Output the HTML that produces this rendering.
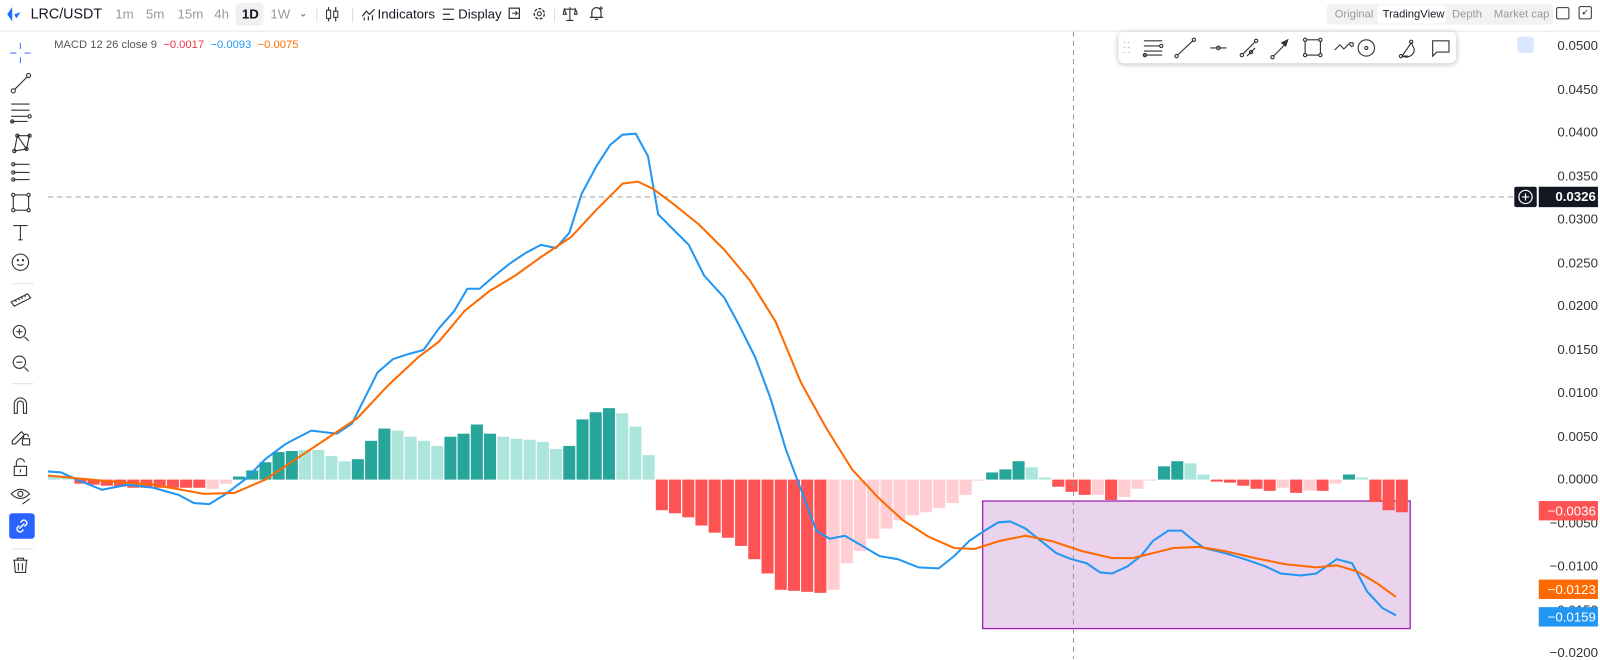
<!DOCTYPE html>
<html><head><meta charset="utf-8">
<style>
html,body{margin:0;padding:0;background:#fff;overflow:hidden;width:1600px;height:659px}
#w{position:absolute;left:0;top:0;width:1568px;height:646px;transform:scale(1.020408);transform-origin:0 0;font-family:"Liberation Sans",sans-serif;color:#131722}
.a{position:absolute}
.tb{font-size:13px;top:6px;color:#999}
.ax{position:absolute;left:1518px;font-size:13px;color:#333;width:48px;text-align:right}
.mk{position:absolute;left:1508px;width:58px;height:19px;color:#fff;font-size:13px;line-height:19px;text-align:right;padding-right:2px;box-sizing:border-box}
</style></head><body><div id="w">
<!-- top bar -->
<div class="a" style="left:0;top:30px;width:1568px;height:1px;background:#e8e8e8"></div>
<svg class="a" style="left:4px;top:6px" width="18" height="16" viewBox="0 0 18 16"><path d="M8 1 L3 8 L8 15 Z" fill="#1e6fff"/><path d="M10 8 L16 6 L12 12 Z" fill="#1e6fff"/></svg>
<div class="a" style="left:30px;top:5px;font-size:14px;color:#131722">LRC/USDT</div>
<div class="a tb" style="left:113px">1m</div>
<div class="a tb" style="left:143px">5m</div>
<div class="a tb" style="left:174px">15m</div>
<div class="a tb" style="left:210px">4h</div>
<div class="a" style="left:231px;top:3px;width:27px;height:22px;background:#f0f0f0;border-radius:3px"></div>
<div class="a tb" style="left:237px;color:#131722;font-weight:bold">1D</div>
<div class="a tb" style="left:265px">1W</div>
<div class="a tb" style="left:293px;font-size:10px;top:8px;color:#555">&#8964;</div>
<div class="a" style="left:310px;top:8px;width:1px;height:14px;background:#ddd"></div>
<svg class="a" style="left:319px;top:6px" width="14" height="16"><path d="M3 1v14M10 1v14" stroke="#333" stroke-width="1.2"/><rect x="1" y="4" width="4" height="8" fill="#fff" stroke="#333"/><rect x="8" y="5" width="4" height="6" fill="#fff" stroke="#333"/></svg>
<div class="a" style="left:345px;top:8px;width:1px;height:14px;background:#ddd"></div>
<svg class="a" style="left:354px;top:7px" width="14" height="14"><path d="M1 9 L5 4 L8 7 L13 2" fill="none" stroke="#333" stroke-width="1.2"/><path d="M3 13v-3M7 13v-4M11 13v-5" stroke="#333" stroke-width="1.2"/></svg>
<div class="a" style="left:370px;top:6px;font-size:13px;color:#131722">Indicators</div>
<svg class="a" style="left:433px;top:7px" width="13" height="14"><path d="M1 2h11M1 7h7M1 12h11" stroke="#333" stroke-width="1.2"/></svg>
<div class="a" style="left:449px;top:6px;font-size:13px;color:#131722">Display</div>
<svg class="a" style="left:497px;top:6px" width="14" height="16"><rect x="2" y="2" width="10" height="10" fill="none" stroke="#333" stroke-width="1.2"/><path d="M5 7h6M8 5l2 2-2 2" stroke="#333" fill="none"/></svg>
<svg class="a" style="left:521px;top:6px" width="15" height="15"><circle cx="7.5" cy="7.5" r="5" fill="none" stroke="#333" stroke-width="1.3" stroke-dasharray="3 1.5"/><circle cx="7.5" cy="7.5" r="2" fill="none" stroke="#333"/></svg>
<div class="a" style="left:543px;top:8px;width:1px;height:14px;background:#ddd"></div>
<svg class="a" style="left:551px;top:6px" width="15" height="15"><path d="M7.5 1v13M2 3h11M4 14h7M2 3l-1 5h3zM13 3l-1 5h3z" stroke="#333" fill="none" stroke-width="1.1"/></svg>
<svg class="a" style="left:577px;top:5px" width="15" height="16"><path d="M3 12V7a4.5 4.5 0 0 1 9 0v5M1 12h13M6 14h3" stroke="#333" fill="none" stroke-width="1.2"/><path d="M12 1v4M10 3h4" stroke="#333"/></svg>
<!-- right segmented -->
<div class="a" style="left:1300px;top:4px;width:222px;height:20px;background:#f2f2f2;border-radius:4px"></div>
<div class="a" style="left:1350px;top:5px;width:67px;height:18px;background:#fff;border-radius:3px"></div>
<div class="a" style="left:1308px;top:8px;font-size:11px;color:#999">Original</div>
<div class="a" style="left:1355px;top:8px;font-size:11px;color:#131722">TradingView</div>
<div class="a" style="left:1423px;top:8px;font-size:11px;color:#999">Depth</div>
<div class="a" style="left:1464px;top:8px;font-size:11px;color:#999">Market cap</div>
<div class="a" style="left:1525px;top:7px;width:11px;height:10px;border:1.3px solid #333;border-radius:2px"></div>
<div class="a" style="left:1547px;top:6px;width:11px;height:11px;border:1.3px solid #333;border-radius:2px;font-size:8px;line-height:10px;text-align:center">&#8601;</div>
<!-- left toolbar -->
<svg class="a" style="left:0;top:31px" width="44" height="560" viewBox="0 31 44 560" fill="none" stroke="#333" stroke-width="1.1">
<path d="M20 42v6M20 56v6M10 52h6M24 52h6" stroke="#4b7bff"/>
<path d="M14 88L27 75"/><circle cx="13" cy="89" r="2"/><circle cx="28" cy="74" r="2"/>
<path d="M11 102h18M11 108h18M11 114h16M11 119h16"/><circle cx="29" cy="114" r="1.6"/><circle cx="12" cy="119" r="1.6"/>
<path d="M14 148l3-15 9 13 3-14M14 148l12-2M17 133l12 0"/><circle cx="14" cy="148" r="1.6"/><circle cx="17" cy="133" r="1.6"/><circle cx="26" cy="146" r="1.6"/><circle cx="29" cy="133" r="1.6"/>
<path d="M13 161h16M13 169h16M13 176h16"/><circle cx="13" cy="161" r="1.6"/><circle cx="13" cy="169" r="1.6"/><circle cx="13" cy="176" r="1.6"/>
<rect x="13" y="191" width="15" height="15"/><circle cx="13" cy="191" r="1.6" fill="#fff"/><circle cx="28" cy="191" r="1.6" fill="#fff"/><circle cx="13" cy="206" r="1.6" fill="#fff"/><circle cx="28" cy="206" r="1.6" fill="#fff"/>
<path d="M13 221h14M20 221v14M18 235h4"/>
<circle cx="20" cy="257" r="8"/><circle cx="17.5" cy="255" r=".6"/><circle cx="22.5" cy="255" r=".6"/><path d="M17 259q3 2 6 0"/>
<path d="M11 296l16-8 3 4-16 8z M15 294l1 2M18 292l1 2M21 291l1 2M24 289l1 2"/>
<circle cx="19" cy="325" r="6"/><path d="M24 330l4 4M16 325h6M19 322v6"/>
<circle cx="19" cy="355" r="6"/><path d="M24 360l4 4M16 355h6"/>
<path d="M14 405v-9a6 6 0 0 1 12 0v9h-3v-9a3 3 0 0 0-6 0v9z"/>
<path d="M12 432l9-9 3 3-9 9h-3z"/><rect x="22" y="430" width="7" height="6"/><path d="M23 430v-2a2.5 2.5 0 0 1 5 0"/>
<rect x="14" y="457" width="12" height="9"/><path d="M16 457v-3a4 4 0 0 1 8 -1M20 460v3"/>
<path d="M11 484q9-9 18 0q-9 9-18 0z"/><circle cx="20" cy="484" r="2.5"/><path d="M22 494l7-5"/>
<path d="M11 538h22M11 278h22M11 376h22" stroke="#e6e6e6"/>
<path d="M13 549h14M17 549v-2h6v2M14 549l1 12h10l1-12M18 552v7M22 552v7"/>
</svg>
<div class="a" style="left:9px;top:503px;width:25px;height:25px;background:#2962ff;border-radius:3px"></div>
<svg class="a" style="left:9px;top:503px" width="25" height="25" fill="none" stroke="#fff" stroke-width="1.4"><path d="M11 9l2-2a3 3 0 0 1 4 4l-2 2M14 16l-2 2a3 3 0 0 1-4-4l2-2M10 15l5-5"/></svg>
<!-- legend -->
<div class="a" style="left:53px;top:38px;font-size:11px;color:#555">MACD 12 26 close 9&nbsp; <span style="color:#f23645">−0.0017</span>&nbsp; <span style="color:#2196f3">−0.0093</span>&nbsp; <span style="color:#ff6a00">−0.0075</span></div>
<!-- chart -->
<svg id="ch" class="a" style="left:0;top:0" width="1568" height="646">
<rect x="963" y="491" width="419" height="125" fill="#ead3ed" stroke="#9c27b0" stroke-width="1.3"/>
<g id="bars"></g>
<path d="M1052 31V646" stroke="#999" stroke-dasharray="5 4"/>
<path d="M47 193H1484" stroke="#aaa" stroke-dasharray="5 4"/>
<polyline fill="none" stroke="#2196f3" stroke-width="2" stroke-linejoin="round" points="47,462 60,463 75,470 100,480 125,475 150,478 175,485 190,493 205,494 220,485 240,470 260,450 280,435 305,422 330,425 345,415 355,395 370,365 385,352 400,347 415,343 430,322 445,305 458,283 470,283 485,270 500,258 515,248 530,240 545,243 558,228 570,190 585,162 598,142 610,132 623,131 635,153 645,210 660,225 675,240 690,270 710,292 725,320 740,350 755,390 770,440 785,480 800,520 813,528 828,525 845,535 862,545 880,548 900,556 920,557 935,545 950,530 965,520 978,512 990,511 1005,518 1020,530 1035,542 1050,548 1065,552 1078,561 1090,562 1105,555 1118,545 1130,530 1145,520 1158,520 1170,530 1180,537 1200,542 1220,548 1240,555 1255,562 1275,564 1290,562 1310,548 1325,552 1340,580 1355,596 1368,603"/>
<polyline fill="none" stroke="#ff6a00" stroke-width="2" stroke-linejoin="round" points="47,466 100,471 150,475 200,484 230,483 260,470 290,450 320,430 350,410 380,378 410,350 430,335 455,305 480,285 505,270 530,252 560,232 585,205 610,180 625,178 640,185 660,200 685,220 710,245 735,275 760,315 785,375 810,420 835,460 860,487 885,510 910,526 935,537 955,538 980,530 1005,525 1030,530 1060,540 1090,547 1110,547 1130,542 1150,537 1175,536 1200,540 1230,547 1260,553 1290,556 1310,554 1330,560 1350,572 1368,585"/>
</svg>
<div class="a" style="left:1096px;top:31px;width:331px;height:31px;background:#fff;border-radius:6px;box-shadow:0 1px 5px rgba(0,0,0,.25)"></div>
<svg class="a" style="left:1096px;top:31px" width="331" height="31" fill="none" stroke="#333" stroke-width="1.1">
<path d="M6 10v1M10 10v1M6 15v1M10 15v1M6 20v1M10 20v1" stroke="#bbb" stroke-width="1.5"/>
<path d="M25 9h18M25 14h15M25 19h18M25 23h18"/><circle cx="42" cy="14" r="1.6"/><circle cx="26" cy="23" r="1.6"/>
<path d="M58 23l15-14"/><circle cx="57" cy="24" r="1.6"/><circle cx="74" cy="8" r="1.6"/>
<path d="M90 16h16"/><circle cx="98" cy="16" r="1.8"/>
<path d="M122 22l12-12M126 24l8-8"/><circle cx="121" cy="23" r="1.6"/><circle cx="135" cy="9" r="1.6"/><circle cx="130" cy="20" r="1.6"/>
<path d="M152 24l12-12"/><path d="M160 11l6-3-2 6z" fill="#333"/><circle cx="151" cy="25" r="1.6"/>
<rect x="183" y="8" width="15" height="15"/><circle cx="183" cy="8" r="1.6" fill="#fff"/><circle cx="198" cy="8" r="1.6" fill="#fff"/><circle cx="183" cy="23" r="1.6" fill="#fff"/><circle cx="198" cy="23" r="1.6" fill="#fff"/>
<path d="M212 18l5-5 4 4 5-5 3 3M226 11h4v4"/>
<circle cx="243" cy="16" r="8"/><circle cx="243" cy="16" r="1.5"/>
<path d="M278 24l9-13 3 6q0 7-8 8zM278 24h6"/><circle cx="277" cy="24" r="1.6"/><circle cx="287" cy="10" r="1.6"/>
<path d="M308 9h16v11h-12l-4 4z"/>
</svg>
<div class="a" style="left:1487px;top:36px;width:16px;height:16px;background:#dbe6ff;border-radius:3px"></div>
<!-- axis -->
<div id="axis"></div>
<div class="a" style="left:1484px;top:183px;width:22px;height:20px;background:#131722;border-radius:2px"></div>
<svg class="a" style="left:1484px;top:183px" width="22" height="20"><circle cx="11" cy="10" r="6.5" fill="none" stroke="#fff" stroke-width="1.2"/><path d="M11 6.5v7M7.5 10h7" stroke="#fff" stroke-width="1.2"/></svg>
<div class="mk" style="top:183px;background:#131722;height:20px;line-height:20px;font-weight:bold">0.0326</div>
<div class="mk" style="top:491px;background:#ff5252">−0.0036</div>
<div class="mk" style="top:568px;background:#ff6a00">−0.0123</div>
<div class="mk" style="top:595px;background:#2196f3">−0.0159</div>
</div>
<script>
var L=[[466,'g'],[466,'g'],[474,'R'],[475,'R'],[476,'R'],[477,'R'],[478,'R'],[478,'R'],[478,'R'],[478,'R'],[478,'R'],[478,'R'],[479,'r'],[474,'r'],[467,'G'],[461,'G'],[453,'G'],[443,'G'],[442,'G'],[441,'g'],[441,'g'],[447,'g'],[452,'g'],[450,'G'],[432,'G'],[420,'G'],[422,'g'],[428,'g'],[432,'g'],[437,'g'],[428,'G'],[425,'G'],[416,'G'],[425,'G'],[428,'g'],[430,'g'],[431,'g'],[433,'g'],[440,'g'],[437,'G'],[411,'G'],[404,'G'],[400,'G'],[405,'g'],[418,'g'],[446,'g']];
[500,503,507,515,522,527,535,548,562,578,579,580,581].forEach(function(v){L.push([v,'R'])});
[578,552,540,528,518,510,505,502,498,493].forEach(function(v){L.push([v,'r'])});
L=L.concat([[485,'r'],[471,'r'],[463,'G'],[460,'G'],[452,'G'],[458,'g'],[468,'g'],[477,'R'],[482,'R'],[485,'R'],[485,'r'],[490,'R'],[487,'r'],[479,'r'],[471,'r'],[457,'G'],[452,'G'],[454,'g'],[465,'g'],[472,'R'],[473,'R'],[476,'R'],[479,'R'],[481,'R'],[478,'r'],[483,'R'],[481,'r'],[481,'R'],[474,'r'],[465,'G'],[468,'g'],[492,'R'],[500,'R'],[502,'R']]);
var C={G:'#26a69a',g:'#ace5dc',R:'#ff5252',r:'#ffcdd2'},s='';
L.forEach(function(b,i){var x=47+i*12.95,y=Math.min(b[0],470),h=Math.abs(b[0]-470);if(h<1)h=1;s+='<rect x="'+x.toFixed(1)+'" y="'+y+'" width="11.8" height="'+h+'" fill="'+C[b[1]]+'"/>';});
document.getElementById('bars').innerHTML=s;
var a='';for(var k=0;k<15;k++){var v=0.05-k*0.005,y=45+k*42.5-8;var t=(v<-1e-9?'−':'')+Math.abs(v).toFixed(4);a+='<div class="ax" style="top:'+y+'px">'+t+'</div>';}
document.getElementById('axis').innerHTML=a;
</script>
</body></html>
